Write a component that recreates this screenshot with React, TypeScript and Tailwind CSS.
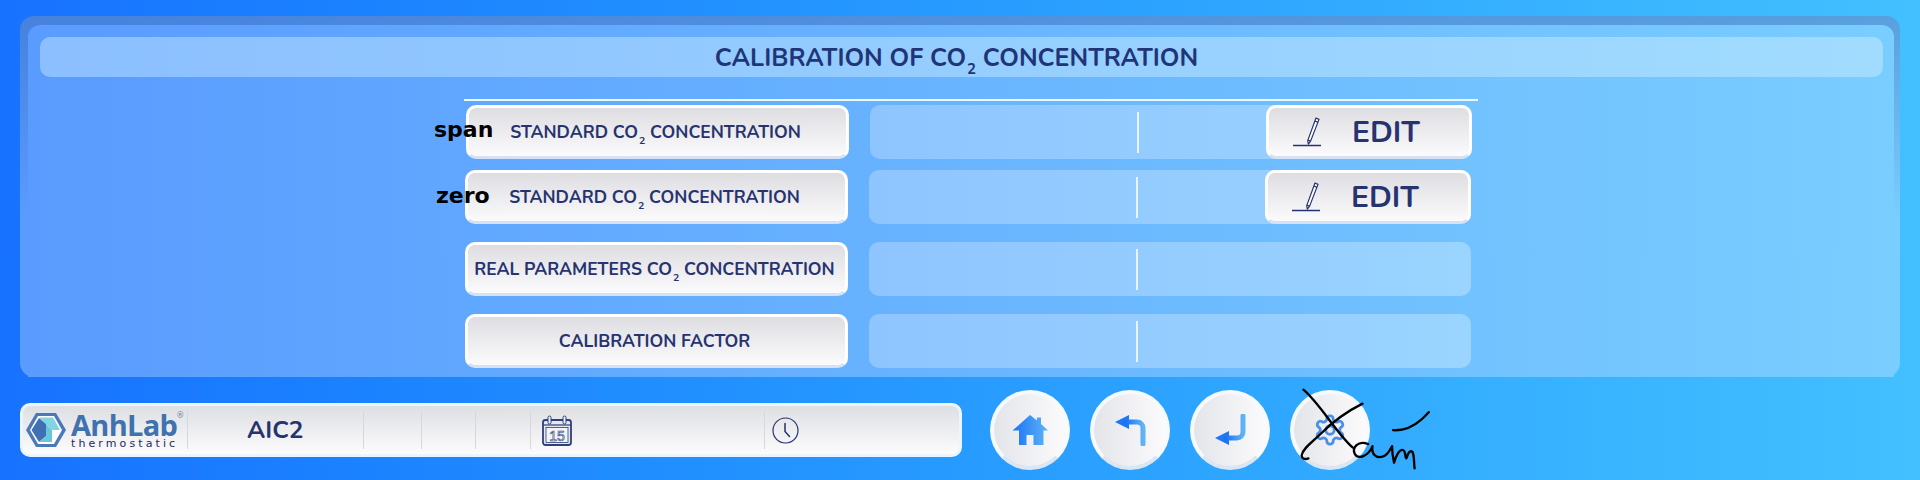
const FONT = "font-['Nunito','Noto_Sans','Open_Sans',sans-serif]";

const Co2 = () => (
  <>
    CO<sub className="text-[0.6em] leading-none relative top-[0.55em] align-baseline ml-[1px]">2</sub>
  </>
);

const Pencil = () => (
  <svg width="30" height="32" viewBox="0 0 30 32" fill="none" stroke="#27336f" strokeWidth="1.2">
    <path d="M1 29.500h28" strokeWidth="1.500" />
    <path d="M24 2l3 1.400-8.500 22-2.200 2.600-.6-3.400z" strokeLinejoin="round" fill="#fff" />
    <path d="M23 5l3 1.400M16 24l2.500 1.100" />
  </svg>
);

const Row = ({
  label,
  tag,
  edit,
  shift,
}: {
  label: React.ReactNode;
  tag?: string;
  edit?: boolean;
  shift?: boolean;
}) => (
  <div className={`relative flex h-[54px] ${shift ? "ml-[2px]" : "ml-px"}`}>
    <div className="w-[383px] h-full rounded-[10px] border-[3px] border-white border-b-[#d4e2f4] bg-gradient-to-b from-[#dedee2] to-[#fbfbfd] flex items-center justify-center pt-[1px] pr-[4px] text-[#27336f] text-[17.5px] font-bold whitespace-nowrap">
      {label}
    </div>
    {tag === "span" && (
      <span className="absolute left-[-32px] top-[10px] font-['DejaVu_Sans',sans-serif] font-bold text-[22px] leading-[30px] text-black">
        span
      </span>
    )}
    {tag === "zero" && (
      <span className="absolute left-[-29px] top-[11px] font-['DejaVu_Sans',sans-serif] font-bold text-[22px] leading-[30px] text-black">
        zero
      </span>
    )}
    <div className="relative w-[602px] h-full ml-[21px] rounded-[10px] bg-gradient-to-r from-[#8fc5ff] to-[#9ad4ff]">
      <div className="absolute left-[267px] top-[7px] w-[2px] h-[41px] bg-[#eaf5ff]" />
      {edit && (
        <div className="absolute right-0 top-0 w-[206px] h-full rounded-[10px] border-[3px] border-white border-b-[#d4e2f4] bg-gradient-to-b from-[#dedee2] to-[#fbfbfd] flex items-center text-[#27336f]">
          <span className="ml-[23px]"><Pencil /></span>
          <span className="ml-[30px] pt-[1px] text-[30px] font-bold leading-none">EDIT</span>
        </div>
      )}
    </div>
  </div>
);

const Circle = ({ children }: { children: React.ReactNode }) => (
  <div className="relative w-[80px] h-[80px] rounded-full border-[4px] border-[#f6fafe] border-b-[#dbe6f2] bg-gradient-to-r from-[#e4e5e9] to-[#fbfbfd] flex items-center justify-center">
    {children}
  </div>
);

const BlueGrad = ({ id }: { id: string }) => (
  <defs>
    <linearGradient id={id} x1="0" y1="0" x2="1" y2="0">
      <stop offset="0" stopColor="#1a73f5" />
      <stop offset="1" stopColor="#5fb4f5" />
    </linearGradient>
  </defs>
);

const Logo = () => (
  <div className="flex items-center pl-[2px]">
    <svg width="42" height="36" viewBox="0 0 42 36">
      <path d="M11 1h20l10 17-10 17H11L1 18z" fill="#4a78b8" />
      <path d="M13 4h16l8 14-8 14H13l-8-14z" fill="#fff" />
      <path d="M14 5.500h14l7 12.500-8 0-6-6z" fill="#7fd6e2" />
      <path d="M21 12l6 6v12H14.500l6.500-6z" fill="#66c8d8" />
      <path d="M14 6l7 6v12l-7 6-7.500-12z" fill="#3f70b4" />
    </svg>
    <div className="ml-[4px] relative flex flex-col">
      <span className="font-['Open_Sans',sans-serif] font-bold text-[29px] leading-[26px] tracking-[-0.7px] text-[#3f72ae]">
        AnhLab
      </span>
      <span className="font-['DejaVu_Sans',sans-serif] text-[11px] leading-[11px] tracking-[3.1px] text-[#1f2a5c] whitespace-nowrap">
        thermostatic
      </span>
      <span className="absolute left-[106px] top-[0px] text-[8px] leading-none text-[#5d7fa8]">®</span>
    </div>
  </div>
);

export default function App() {
  return (
    <div className={`w-[1920px] h-[480px] overflow-hidden bg-gradient-to-r from-[#1872ff] to-[#42c0ff] pt-[16px] ${FONT}`}>
      {/* main panel */}
      <div className="mx-[20px] h-[361px] rounded-[14px] bg-[linear-gradient(to_bottom,rgba(40,90,170,0.4),rgba(40,90,170,0)_55%),linear-gradient(to_right,#5a9bff,#79cdff)] pt-[9px] pl-[8px] pr-[6px]">
        <div className="h-full rounded-t-[12px] bg-gradient-to-r from-[#5a9bff] to-[#79cdff] pt-[12px]">
          <div className="h-[40px] ml-[12px] mr-[11px] rounded-[10px] bg-gradient-to-r from-[#8bbfff] to-[#a1dcff] flex items-center justify-center pt-[3px] text-[#1f3577] text-[25px] font-bold whitespace-nowrap">
            <span className="mr-[10px]">
              CALIBRATION OF <Co2 /> CONCENTRATION
            </span>
          </div>
          <div className="ml-[436px] mt-[22px] w-[1014px]">
            <div className="h-[2px] bg-[#eef8ff]" />
            <div className="mt-[4px] flex flex-col">
              <Row shift tag="span" edit label={<span>STANDARD <Co2 /> CONCENTRATION</span>} />
              <div className="h-[11px]" />
              <Row tag="zero" edit label={<span>STANDARD <Co2 /> CONCENTRATION</span>} />
              <div className="h-[18px]" />
              <Row label={<span>REAL PARAMETERS <Co2 /> CONCENTRATION</span>} />
              <div className="h-[18px]" />
              <Row label={<span>CALIBRATION FACTOR</span>} />
            </div>
          </div>
        </div>
      </div>

      {/* bottom bar */}
      <div className="mt-[13px] ml-[20px] flex items-center">
        <div className="w-[942px] h-[54px] rounded-[10px] border-[3px] border-[#eaf6ff] bg-gradient-to-b from-[#dedfe3] to-[#fcfcfd] flex text-[#27336f] py-[5px]">
          <div className="w-[165px] border-r border-[#d8d8dc] flex items-center">
            <Logo />
          </div>
          <div className="w-[176px] border-r border-[#d8d8dc] flex items-center pl-[59px] text-[24.5px] font-bold">
            AIC2
          </div>
          <div className="w-[58px] border-r border-[#d8d8dc]" />
          <div className="w-[54px] border-r border-[#d8d8dc]" />
          <div className="w-[55px] border-r border-[#d8d8dc]" />
          <div className="w-[234px] border-r border-[#d8d8dc] flex items-center pl-[11px]">
            <svg width="30" height="31" viewBox="0 0 30 31" fill="none" stroke="#2f3f78">
              <rect x="1" y="5" width="28" height="25" rx="2.500" strokeWidth="1.800" fill="#e6e8f0" />
              <path d="M1 10h28" strokeWidth="1.200" />
              <rect x="6" y="1" width="3" height="8" rx="1.500" fill="#eef0f5" />
              <rect x="21" y="1" width="3" height="8" rx="1.500" fill="#eef0f5" />
              <rect x="4" y="12.500" width="22" height="15" fill="#f2f4f8" strokeWidth="0.800" />
              <text x="15" y="25.500" textAnchor="middle" fontSize="14" fontWeight="400" fontFamily="Liberation Sans" fill="#f2f4f8" stroke="#2f3f78" strokeWidth="0.600">15</text>
            </svg>
          </div>
          <div className="flex-1 flex items-center pl-[7px]">
            <svg width="27" height="27" viewBox="0 0 27 27" fill="none" stroke="#27336f">
              <circle cx="13.500" cy="13.500" r="12.500" strokeWidth="1.200" />
              <path d="M13 6.500v8l4.500 5" strokeWidth="1.500" strokeLinecap="round" />
            </svg>
          </div>
        </div>

        <div className="ml-[28px] flex gap-[20px]">
          <Circle>
            <svg width="36" height="32" viewBox="0 0 36 32">
              <BlueGrad id="homeGrad" />
              <path d="M18 1l7 5.500V3.500h4v6.500l7 6.500h-4.500V31H21.500V21h-7v10H7V16.500H.500z" fill="url(#homeGrad)" />
            </svg>
          </Circle>
          <Circle>
            <svg width="32" height="32" viewBox="0 0 32 32" fill="none">
              <BlueGrad id="backGrad" />
              <path d="M1 8l14-7v14z" fill="#1f78f2" />
              <path d="M12 8h11a6 6 0 0 1 6 6v16" stroke="url(#backGrad)" strokeWidth="5" strokeLinecap="round" />
            </svg>
          </Circle>
          <Circle>
            <svg width="32" height="32" viewBox="0 0 32 32" fill="none">
              <BlueGrad id="enterGrad" />
              <path d="M1 24l14-7v14z" fill="#1f78f2" />
              <path d="M12 24h11a6 6 0 0 0 6-6V2" stroke="url(#enterGrad)" strokeWidth="5" strokeLinecap="round" />
            </svg>
          </Circle>
          <Circle>
            <svg width="34" height="34" viewBox="0 0 24 24" fill="none" stroke="#4a90e8" strokeWidth="2" strokeLinecap="round" strokeLinejoin="round">
              <path d="M12.220 2h-.44a2 2 0 0 0-2 2v.18a2 2 0 0 1-1 1.730l-.43.250a2 2 0 0 1-2 0l-.15-.08a2 2 0 0 0-2.730.730l-.22.380a2 2 0 0 0 .730 2.730l.15.100a2 2 0 0 1 1 1.720v.510a2 2 0 0 1-1 1.740l-.15.090a2 2 0 0 0-.730 2.730l.22.380a2 2 0 0 0 2.730.730l.15-.08a2 2 0 0 1 2 0l.43.250a2 2 0 0 1 1 1.730V20a2 2 0 0 0 2 2h.44a2 2 0 0 0 2-2v-.18a2 2 0 0 1 1-1.730l.43-.250a2 2 0 0 1 2 0l.15.080a2 2 0 0 0 2.730-.730l.22-.390a2 2 0 0 0-.730-2.730l-.15-.080a2 2 0 0 1-1-1.740v-.500a2 2 0 0 1 1-1.740l.15-.090a2 2 0 0 0 .730-2.730l-.22-.380a2 2 0 0 0-2.730-.730l-.15.080a2 2 0 0 1-2 0l-.43-.250a2 2 0 0 1-1-1.730V4a2 2 0 0 0-2-2z" />
              <circle cx="12" cy="12" r="3" />
            </svg>
            {/* handwritten scribble over the settings button */}
            <svg
              className="absolute left-[6px] top-[-7px] pointer-events-none"
              width="133"
              height="83"
              viewBox="1020 80 400 250"
              fill="none"
              stroke="#000"
              strokeWidth="7"
              strokeLinecap="round"
              strokeLinejoin="round"
            >
              <path d="M1030 88C1080 130 1130 220 1178 262" />
              <path d="M1225 252C1195 240 1175 262 1185 282C1195 298 1225 290 1238 258C1235 280 1245 295 1268 290C1285 285 1290 270 1297 258C1297 280 1300 295 1303 308C1310 285 1320 265 1330 270C1340 275 1335 295 1340 295C1345 280 1350 270 1358 275C1365 285 1362 310 1365 325" />
              <path d="M1208 130c-50 25-90 55-125 90-25 25-55 45-58 65-2 12 10 14 20 10" />
              <path d="M1300 210c35 2 60-10 85-32 10-8 15-15 23-22" />
            </svg>
          </Circle>
        </div>
      </div>
    </div>
  );
}
